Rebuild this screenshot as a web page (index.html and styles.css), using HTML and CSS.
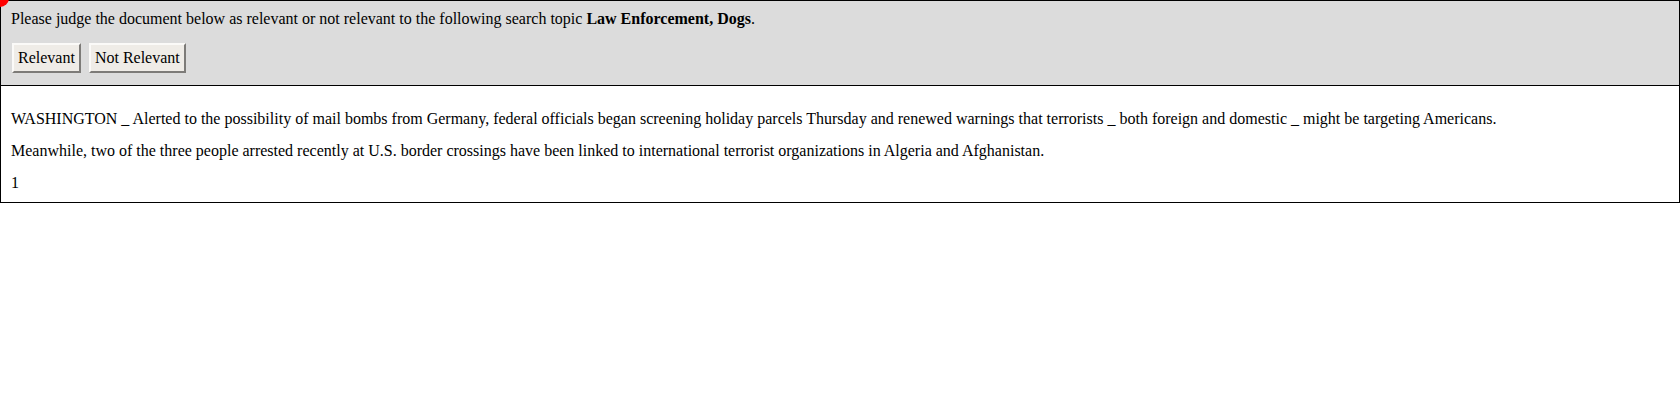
FILE: index.html
```html
<!DOCTYPE html>
<html>
<head>
<meta charset="utf-8">
<link rel="stylesheet" href="styles.css">
</head>
<body>
<div class="dot"></div>
<div class="frame">
  <div class="head">
    <div class="prompt">Please judge the document below as relevant or not relevant to the following search topic <b>Law Enforcement, Dogs</b>.</div>
    <div class="actions">
      <button class="btn">Relevant</button>
      <button class="btn">Not Relevant</button>
    </div>
  </div>
  <div class="doc">
    <p>WASHINGTON _ Alerted to the possibility of mail bombs from Germany, federal officials began screening holiday parcels Thursday and renewed warnings that terrorists _ both foreign and domestic _ might be targeting Americans.</p>
    <p>Meanwhile, two of the three people arrested recently at U.S. border crossings have been linked to international terrorist organizations in Algeria and Afghanistan.</p>
    <p>1</p>
  </div>
</div>
</body>
</html>
```
FILE: styles.css
```css
html, body {
  margin: 0;
  padding: 0;
  background: #fff;
}
body {
  font-family: "Liberation Serif", "Times New Roman", serif;
  font-size: 16px;
  color: #000;
  position: relative;
}
.dot {
  position: absolute;
  left: -9px;
  top: -11px;
  width: 18px;
  height: 18px;
  border-radius: 50%;
  background: #f00;
  z-index: 2;
}
.frame {
  border: 1px solid #000;
}
.head {
  background: #dcdcdc;
  border-bottom: 1px solid #000;
  padding: 9px 10px 12px;
}
.prompt {
  line-height: 18px;
}
.actions {
  display: flex;
  gap: 8px;
  margin-top: 15px;
  padding-left: 1px;
}
.btn {
  font-family: "Liberation Serif", "Times New Roman", serif;
  font-size: 16px;
  color: #000;
  background: #efece7;
  border: 2px solid;
  border-color: #fbfaf8 #7d7b78 #7d7b78 #fbfaf8;
  padding: 4px 4px;
  line-height: 18px;
  margin: 0;
}
.doc {
  padding: 10px 10px 0;
}
.doc p {
  margin: 14px 0;
  line-height: 18px;
}
.doc p:last-child {
  margin-bottom: 10px;
}
```
